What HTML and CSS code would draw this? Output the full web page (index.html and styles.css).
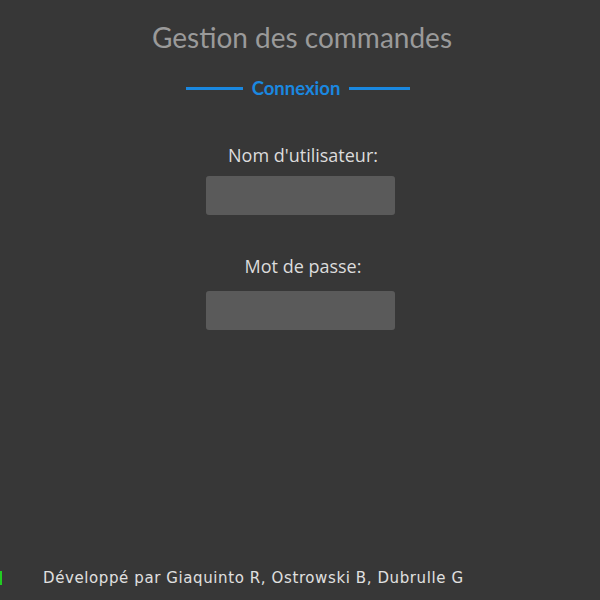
FILE: index.html
```html
<!DOCTYPE html>
<html lang="fr">
<head>
<meta charset="utf-8">
<title>Gestion des commandes</title>
<link rel="stylesheet" href="styles.css">
</head>
<body>
<div class="page">
  <main class="main">
    <h1 class="title">Gestion des commandes</h1>
    <div class="legend">
      <span class="line"></span>
      <span class="legend-text">Connexion</span>
      <span class="line line-right"></span>
    </div>
    <form class="form">
      <label class="label" for="user">Nom d'utilisateur:</label>
      <input class="input" id="user" type="text">
      <label class="label label-pass" for="pass">Mot de passe:</label>
      <input class="input input-pass" id="pass" type="password">
    </form>
  </main>
  <footer class="footer">
    <span class="marker"></span>
    <span class="footer-text">Développé par Giaquinto R, Ostrowski B, Dubrulle G</span>
  </footer>
</div>
</body>
</html>
```
FILE: styles.css
```css
html, body {
  margin: 0;
  padding: 0;
  height: 100%;
  background: #373737;
}
.page {
  height: 600px;
  display: flex;
  flex-direction: column;
  font-family: Lato, "Open Sans", sans-serif;
}
.main {
  flex: 1;
  display: flex;
  flex-direction: column;
  align-items: center;
}
.title {
  margin: 21px 0 0 0;
  font-weight: 400;
  font-size: 28px;
  line-height: 32px;
  color: #9a9a9a;
  padding-left: 4px;
}
.legend {
  margin-top: 24px;
  display: flex;
  align-items: center;
  gap: 9px;
  padding-right: 4px;
}
.line {
  width: 57px;
  height: 3px;
  background: #1a88e0;
}
.line-right {
  width: 61px;
}
.legend-text {
  font-weight: 700;
  font-size: 18.5px;
  line-height: 22px;
  color: #1a88e0;
}
.form {
  margin-top: 44px;
  display: flex;
  flex-direction: column;
  align-items: center;
}
.label {
  font-family: "Open Sans", sans-serif;
  font-size: 18px;
  line-height: 24px;
  color: #dcdcdc;
  padding-left: 6px;
}
.label-pass {
  margin-top: 39px;
}
.input {
  margin-top: 9px;
  width: 189px;
  height: 39px;
  box-sizing: border-box;
  border: none;
  border-radius: 3px;
  background: #5a5a5a;
  outline: none;
}
.input-pass {
  margin-top: 13px;
}
.footer {
  height: 30px;
  display: flex;
  align-items: center;
  margin-bottom: 7px;
}
.marker {
  width: 2px;
  height: 14px;
  background: #22cc22;
}
.footer-text {
  margin-left: 41px;
  font-family: "DejaVu Sans", Verdana, sans-serif;
  font-size: 15px;
  letter-spacing: 0.6px;
  color: #e0e0e0;
}
```
